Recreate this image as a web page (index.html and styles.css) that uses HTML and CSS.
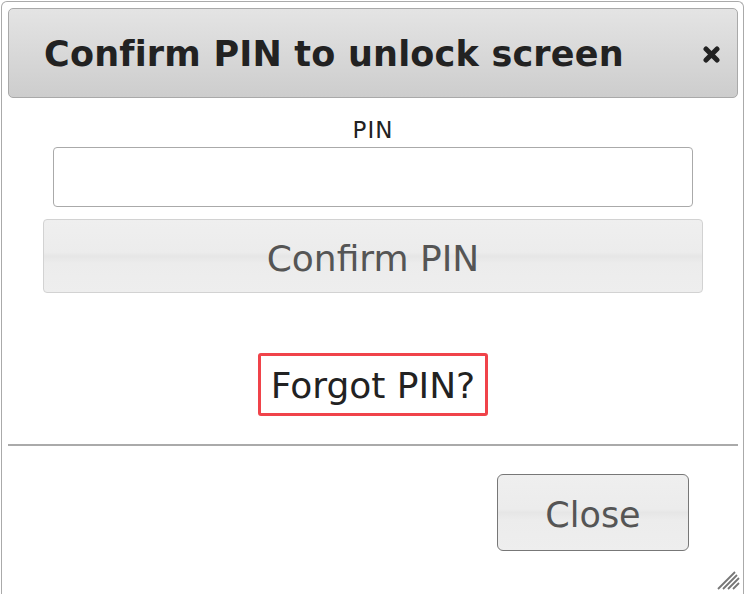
FILE: index.html
```html
<!DOCTYPE html>
<html>
<head>
<meta charset="utf-8">
<link rel="stylesheet" href="styles.css">
</head>
<body>
<div class="dialog">
  <div class="titlebar">
    <span class="title">Confirm PIN to unlock screen</span>
    <svg class="close-x" width="17" height="17" viewBox="0 0 17 17"><path d="M3 3 L14 14 M14 3 L3 14" stroke="#222" stroke-width="5" stroke-linecap="round" fill="none"/></svg>
  </div>
  <div class="content">
    <label class="pin-label">PIN</label>
    <div class="pin-input"></div>
    <div class="btn confirm">Confirm PIN</div>
    <div class="forgot">Forgot PIN?</div>
  </div>
  <div class="sep"></div>
  <div class="footer">
    <div class="btn close">Close</div>
  </div>
  <svg class="grip" width="26" height="26" viewBox="0 0 26 26"><path d="M3 24 L20 7 M8 24 L22 10 M13 24 L24 13 M18 24 L24 18" stroke="#777" stroke-width="1.8" fill="none"/></svg>
</div>
</body>
</html>
```

FILE: styles.css
```css
html, body {
  margin: 0;
  padding: 0;
  background: #fff;
  overflow: hidden;
}
body {
  font-family: "DejaVu Sans", Verdana, sans-serif;
  color: #222;
}
.dialog {
  position: relative;
  margin: 1px 2px 0 1px;
  height: 593px;
  border: 1px solid #aaa;
  border-bottom: none;
  border-radius: 6px 6px 0 0;
  padding: 6px 5px 0 6px;
  box-sizing: border-box;
  display: flex;
  flex-direction: column;
}
.titlebar {
  height: 90px;
  box-sizing: border-box;
  border: 1px solid #a9a9a9;
  border-radius: 5px;
  background: linear-gradient(#e4e4e4, #cdcdcd);
  display: flex;
  align-items: center;
  justify-content: space-between;
  padding: 0 17px 0 35px;
}
.title {
  font-weight: bold;
  font-size: 35px;
  letter-spacing: 0.2px;
  color: #222;
  line-height: 40px;
  padding-top: 1px;
}
.close-x {
  display: block;
  margin-top: 2px;
}
.content {
  display: flex;
  flex-direction: column;
  align-items: center;
}
.pin-label {
  margin-top: 18px;
  font-size: 23px;
  line-height: 28px;
  letter-spacing: 1px;
  color: #222;
}
.pin-input {
  margin-top: 3px;
  width: 640px;
  height: 60px;
  box-sizing: border-box;
  border: 1px solid #aaa;
  border-radius: 4px;
  background: #fff;
}
.btn {
  box-sizing: border-box;
  display: flex;
  align-items: center;
  justify-content: center;
  font-size: 35px;
  color: #555;
  background: linear-gradient(#efefef 0%, #ececec 45%, #e6e6e6 50%, #ececec 60%, #eeeeee 100%);
}
.confirm {
  margin-top: 12px;
  width: 660px;
  height: 74px;
  border: 1px solid #d2d2d2;
  border-radius: 4px;
  padding-top: 4px;
  font-size: 36px;
}
.forgot {
  margin-top: 60px;
  width: 230px;
  height: 63px;
  box-sizing: border-box;
  border: 3px solid #f0434a;
  border-radius: 3px;
  font-size: 36px;
  color: #222;
  display: flex;
  align-items: center;
  justify-content: center;
  padding-top: 2px;
}
.sep {
  margin-top: 28px;
  height: 2px;
  background: #aaa;
}
.footer {
  display: flex;
  justify-content: flex-end;
  padding-right: 49px;
}
.close {
  margin-top: 28px;
  width: 192px;
  height: 77px;
  border: 1px solid #777;
  border-radius: 6px;
  padding-top: 4px;
}
.grip {
  position: absolute;
  right: 2px;
  bottom: 3px;
}
```
